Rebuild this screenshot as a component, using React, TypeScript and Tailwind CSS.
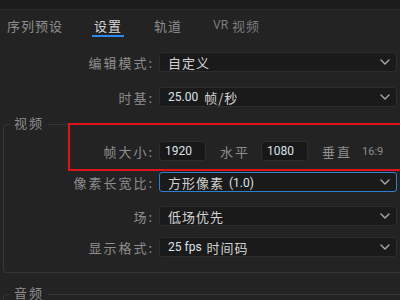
import React from "react";

const CJK = { fontFamily: '"Noto Sans CJK SC", "Noto Sans", sans-serif' };
const NUM = { fontFamily: 'Roboto, "Noto Sans CJK SC", sans-serif' };

function Chevron() {
  return (
    <svg width="10" height="6" viewBox="0 0 10 6" className="shrink-0">
      <polyline points="1,1 5,5 9,1" fill="none" stroke="#a8a8a8" strokeWidth="1.4" strokeLinecap="round" strokeLinejoin="round" />
    </svg>
  );
}

function Dropdown({ children, active = false }: { children: React.ReactNode; active?: boolean }) {
  return (
    <div
      className={
        "flex items-center justify-between h-[20px] w-[238px] rounded-[3px] bg-[#1a1a1a] pl-[8px] pr-[6px] " +
        (active ? "border border-[#2f7fcf]" : "border border-[#2d2d2d]")
      }
    >
      <div className="flex items-center text-[13px] tracking-[1px] text-[#d2d2d2] leading-none">{children}</div>
      <Chevron />
    </div>
  );
}

function Label({ children, w }: { children: React.ReactNode; w: number }) {
  return (
    <div className="text-right text-[13px] tracking-[2px] text-[#8e8e8e] leading-none" style={{ width: w }}>
      {children}
    </div>
  );
}

function Num({ children }: { children: React.ReactNode }) {
  return (
    <span className="text-[12px] tracking-normal text-[#dde3ea]" style={NUM}>
      {children}
    </span>
  );
}

export default function App() {
  return (
    <div className="relative w-[400px] h-[300px] overflow-hidden bg-[#232323]" style={CJK}>
      <div className="h-[10px] bg-[#1c1c1c] border-b border-[#2b2b2b]" />
      {/* Tabs */}
      <div className="flex h-[27px] text-[13px] tracking-[1px] leading-none">
        <div className="ml-[7px] flex items-center pt-[3px] text-[#8e8e8e]">序列预设</div>
        <div className="relative ml-[31px] flex items-center pt-[3px] text-[#d6d6d6]">
          设置
          <div className="absolute left-[-2px] right-[-2px] bottom-0 h-[2px] bg-[#2d8ceb]" />
        </div>
        <div className="ml-[32px] flex items-center pt-[3px] text-[#8e8e8e]">轨道</div>
        <div className="ml-[31px] flex items-center pt-[3px] text-[#7c7c7c]">
          <span className="text-[12px] tracking-normal mr-[4px]" style={NUM}>VR</span>视频
        </div>
      </div>

      {/* 编辑模式 */}
      <div className="mt-[15px] flex items-center">
        <Label w={154}>编辑模式:</Label>
        <div className="ml-[5px]">
          <Dropdown>自定义</Dropdown>
        </div>
      </div>
      {/* 时基 */}
      <div className="mt-[15px] flex items-center">
        <Label w={154}>时基:</Label>
        <div className="ml-[5px]">
          <Dropdown>
            <Num>25.00</Num>
            <span className="ml-[6px]">帧/秒</span>
          </Dropdown>
        </div>
      </div>

      {/* 视频 group */}
      <div className="relative mt-[17px] ml-[3px] w-[420px] border-l border-t border-b border-[#363636] rounded-l-[4px] pt-[16px] pb-[15px]">
        <div className="absolute left-[6px] top-[-9px] bg-[#232323] px-[4px] text-[13px] tracking-[2px] text-[#8e8e8e] leading-none">
          视频
        </div>
        <div className="flex items-center">
          <Label w={150}>帧大小:</Label>
          <div className="ml-[5px] flex h-[20px] w-[47px] items-center rounded-[3px] border border-[#2d2d2d] bg-[#181818] pl-[5px]">
            <Num>1920</Num>
          </div>
          <div className="ml-[14px] text-[13px] tracking-[2px] text-[#8e8e8e] leading-none">水平</div>
          <div className="ml-[11px] flex h-[20px] w-[47px] items-center rounded-[3px] border border-[#2d2d2d] bg-[#181818] pl-[5px]">
            <Num>1080</Num>
          </div>
          <div className="ml-[14px] text-[13px] tracking-[2px] text-[#8e8e8e] leading-none">垂直</div>
          <div className="ml-[10px] text-[11px] text-[#8e8e8e] leading-none" style={NUM}>16:9</div>
        </div>
        <div className="mt-[11px] flex items-center">
          <Label w={150}>像素长宽比:</Label>
          <div className="ml-[5px]">
            <Dropdown active>
              方形像素<span className="ml-[5px]"><Num>(1.0)</Num></span>
            </Dropdown>
          </div>
        </div>
        <div className="mt-[14px] flex items-center">
          <Label w={150}>场:</Label>
          <div className="ml-[5px]">
            <Dropdown>低场优先</Dropdown>
          </div>
        </div>
        <div className="mt-[11px] flex items-center">
          <Label w={150}>显示格式:</Label>
          <div className="ml-[5px]">
            <Dropdown>
              <Num>25 fps</Num>
              <span className="ml-[5px]">时间码</span>
            </Dropdown>
          </div>
        </div>
      </div>

      {/* 音频 group */}
      <div className="relative mt-[21px] ml-[3px] w-[420px] h-[30px] border-l border-t border-[#363636] rounded-tl-[4px]">
        <div className="absolute left-[6px] top-[-9px] bg-[#232323] px-[4px] text-[13px] tracking-[2px] text-[#8e8e8e] leading-none">
          音频
        </div>
      </div>

      {/* red highlight */}
      <div className="absolute left-[68px] top-[123px] w-[340px] h-[48px] border-2 border-[#e0121c]" />
    </div>
  );
}
